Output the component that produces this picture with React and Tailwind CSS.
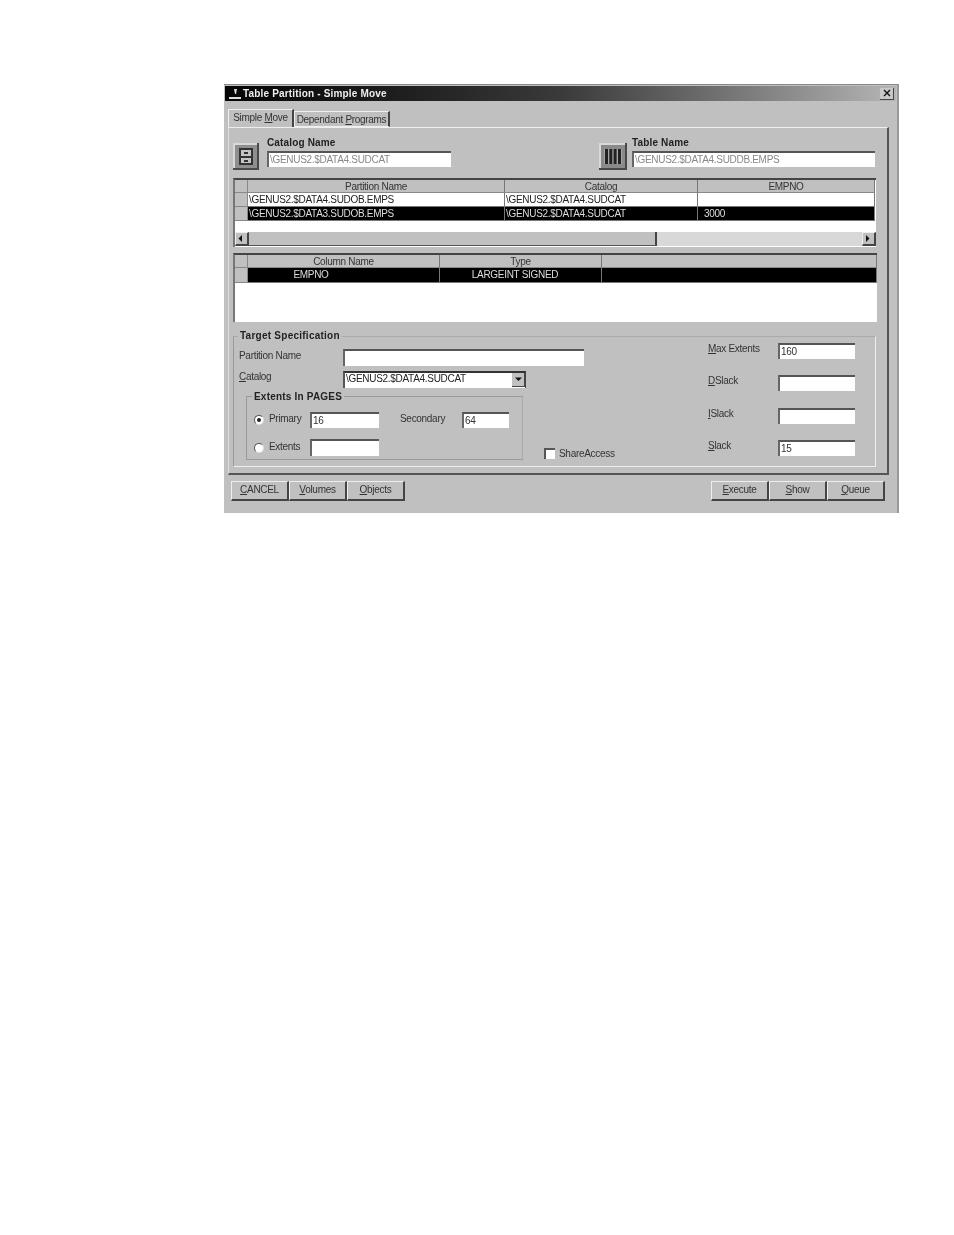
const font = { fontFamily: '"Liberation Sans", Arial, sans-serif' };

function Field({ className = "", children }) {
  return (
    <div className={"h-[16px] bg-white border-t-2 border-l-2 border-t-[#555] border-l-[#666] pl-[1px] text-[10px] leading-[14px] text-[#333] whitespace-nowrap overflow-hidden " + className}>
      {children}
    </div>
  );
}

function U({ children }) {
  return <span className="underline">{children}</span>;
}

function HeaderCell({ className = "", children }) {
  return (
    <div className={"h-full bg-[#c0c0c0] border-r border-r-[#777] border-b border-b-[#888] text-center text-[10px] leading-[13px] text-[#333] " + className}>
      {children}
    </div>
  );
}

function Cell({ className = "", dark, center, children }) {
  return (
    <div className={"h-full border-r border-b border-[#777] pl-[1px] text-[10px] leading-[13px] whitespace-nowrap " + (dark ? "bg-black text-[#ddd] " : "bg-white text-[#222] ") + (center ? "text-center " : "") + className}>
      {children}
    </div>
  );
}

function Indicator() {
  return <div className="w-[13px] h-full bg-[#c0c0c0] border-r border-b border-[#888] shrink-0" />;
}

function Button({ className = "", children }) {
  return (
    <div className={"h-[20px] bg-[#c0c0c0] border-t border-l border-t-[#eee] border-l-[#eee] border-r-2 border-b-2 border-r-[#444] border-b-[#444] text-center text-[10px] leading-[16px] text-[#333] " + className}>
      {children}
    </div>
  );
}

function Radio({ on }) {
  return (
    <div className="w-[10px] h-[10px] rounded-full bg-white border border-t-[#555] border-l-[#555] border-r-[#ddd] border-b-[#ddd] flex items-center justify-center shrink-0">
      {on && <div className="w-[4px] h-[4px] rounded-full bg-[#222]" />}
    </div>
  );
}

function CabinetIcon() {
  return (
    <svg width="26" height="27" viewBox="0 0 26 27">
      <rect x="0" y="0" width="26" height="27" fill="#8f8f8f" />
      <path d="M0 0H26V2H2V27H0Z" fill="#d8d8d8" />
      <path d="M26 27H0V25H24V0H26Z" fill="#4a4a4a" />
      <rect x="6" y="5" width="14" height="17" fill="#333" />
      <rect x="8" y="7" width="10" height="6" fill="#c4c4c4" />
      <rect x="8" y="15" width="10" height="5" fill="#c4c4c4" />
      <rect x="11" y="9" width="4" height="2" fill="#333" />
      <rect x="11" y="17" width="4" height="2" fill="#333" />
    </svg>
  );
}

function BarsIcon() {
  return (
    <svg width="28" height="27" viewBox="0 0 28 27">
      <rect x="0" y="0" width="28" height="27" fill="#8a8a8a" />
      <path d="M0 0H28V2H2V27H0Z" fill="#d8d8d8" />
      <path d="M28 27H0V25H26V0H28Z" fill="#484848" />
      <rect x="5" y="6" width="18" height="15" fill="#a5a5a5" />
      <rect x="6" y="6" width="3" height="15" fill="#222" />
      <rect x="10.3" y="6" width="3" height="15" fill="#222" />
      <rect x="14.6" y="6" width="3" height="15" fill="#222" />
      <rect x="19" y="6" width="3" height="15" fill="#222" />
    </svg>
  );
}

function Arrow({ dir }) {
  const d = dir === "left" ? "M5 1V8L1.5 4.5Z" : dir === "right" ? "M2 1V8L5.5 4.5Z" : "M1 2.5H8L4.5 6Z";
  return (
    <svg width="9" height="9" viewBox="0 0 9 9">
      <path d={d} fill="#111" />
    </svg>
  );
}

function ScrollButton({ dir }) {
  return (
    <div className="w-[14px] h-[14px] bg-[#c0c0c0] border-r-2 border-b-2 border-r-[#444] border-b-[#444] border-t border-l border-t-[#eee] border-l-[#eee] flex items-center justify-center shrink-0">
      <Arrow dir={dir} />
    </div>
  );
}

function RightRow({ label, value, className = "" }) {
  return (
    <div className={"flex items-start h-[16px] " + className}>
      <div className="w-[70px] -mt-[1px] text-[10px] leading-[13px] text-[#333] whitespace-nowrap">{label}</div>
      <Field className="w-[77px]">{value}</Field>
    </div>
  );
}

export default function App() {
  return (
    <div className="w-[954px] h-[1235px] bg-white pt-[84px] pl-[224px]" style={font}>
      <div className="w-[675px] h-[429px] bg-[#c0c0c0] border-t border-r-2 border-t-[#888] border-r-[#999] blur-[0.6px] tracking-[-0.3px]">
        {/* title bar */}
        <div className="mx-[1px] mt-[1px] h-[15px] bg-gradient-to-r from-[#050505] via-[#3a3a3a] to-[#b5b5b5] flex items-center justify-between pl-[2px] pr-[2px]">
          <div className="flex items-center">
            <svg width="16" height="12" viewBox="0 0 16 12" className="shrink-0">
              <path d="M7 1H10L9 6H8ZM2 9H14V11H2Z" fill="#ddd" />
            </svg>
            <span className="text-[10px] font-bold text-[#eee] leading-[14px] whitespace-nowrap tracking-[0.17px]">Table Partition - Simple Move</span>
          </div>
          <div className="w-[14px] h-[12px] bg-[#c8c8c8] border-r border-b border-r-[#444] border-b-[#444] flex items-center justify-center">
            <svg width="8" height="8" viewBox="0 0 8 8">
              <path d="M1 1L7 7M7 1L1 7" stroke="#111" strokeWidth="1.4" />
            </svg>
          </div>
        </div>

        {/* tabs */}
        <div className="flex items-end ml-[4px] mt-[7px] h-[19px] relative z-10">
          <div className="w-[66px] h-[18px] bg-[#c0c0c0] border-t border-l border-t-[#eee] border-l-[#eee] border-r-2 border-r-[#444] text-center text-[10px] leading-[15px] text-[#333] whitespace-nowrap">
            Simple <U>M</U>ove
          </div>
          <div className="w-[96px] h-[16px] bg-[#c0c0c0] border-t border-l border-t-[#eee] border-l-[#eee] border-r-2 border-r-[#444] border-b border-b-[#eee] text-center text-[10px] leading-[15px] text-[#333] whitespace-nowrap">
            Dependant <U>P</U>rograms
          </div>
        </div>

        {/* tab panel */}
        <div className="ml-[4px] w-[661px] h-[348px] border-t border-l border-t-[#eee] border-l-[#ddd] border-r-2 border-b-2 border-r-[#555] border-b-[#555] pl-[4px] pt-[9px]">
          {/* name row */}
          <div className="flex items-start h-[32px]">
            <div className="mt-[6px] shrink-0"><CabinetIcon /></div>
            <div className="ml-[8px] w-[184px]">
              <div className="h-[14px] text-[10px] font-bold leading-[12px] text-[#222] tracking-[0.15px]">Catalog Name</div>
              <Field className="text-[#888]">\GENUS2.$DATA4.SUDCAT</Field>
            </div>
            <div className="ml-[148px] mt-[6px] shrink-0"><BarsIcon /></div>
            <div className="ml-[5px] w-[243px]">
              <div className="h-[14px] text-[10px] font-bold leading-[12px] text-[#222] tracking-[0.15px]">Table Name</div>
              <Field className="text-[#888]">\GENUS2.$DATA4.SUDDB.EMPS</Field>
            </div>
          </div>

          {/* partition grid */}
          <div className="mt-[9px] w-[643px] h-[69px] border-t-2 border-l-2 border-t-[#444] border-l-[#777] bg-white flex flex-col">
            <div className="flex h-[13px]">
              <Indicator />
              <HeaderCell className="w-[257px]">Partition Name</HeaderCell>
              <HeaderCell className="w-[193px]">Catalog</HeaderCell>
              <HeaderCell className="w-[177px]">EMPNO</HeaderCell>
            </div>
            <div className="flex h-[14px]">
              <Indicator />
              <Cell className="w-[257px]">\GENUS2.$DATA4.SUDOB.EMPS</Cell>
              <Cell className="w-[193px]">\GENUS2.$DATA4.SUDCAT</Cell>
              <Cell className="w-[177px]" />
            </div>
            <div className="flex h-[14px]">
              <Indicator />
              <Cell dark className="w-[257px]">\GENUS2.$DATA3.SUDOB.EMPS</Cell>
              <Cell dark className="w-[193px]">\GENUS2.$DATA4.SUDCAT</Cell>
              <Cell dark className="w-[177px] pl-[6px]">3000</Cell>
            </div>
            <div className="flex-1" />
            <div className="flex h-[14px] mb-[1px] bg-[#d8d8d8] w-[641px]">
              <ScrollButton dir="left" />
              <div className="w-[408px] h-full bg-[#c0c0c0] border-r-2 border-b border-r-[#444] border-b-[#555]" />
              <div className="flex-1" />
              <ScrollButton dir="right" />
            </div>
          </div>

          {/* column grid */}
          <div className="mt-[6px] w-[644px] h-[69px] border-t-2 border-l-2 border-t-[#444] border-l-[#777] bg-white">
            <div className="flex h-[13px]">
              <Indicator />
              <HeaderCell className="w-[192px]">Column Name</HeaderCell>
              <HeaderCell className="w-[162px]">Type</HeaderCell>
              <HeaderCell className="flex-1" />
            </div>
            <div className="flex h-[15px]">
              <Indicator />
              <Cell dark center className="w-[192px] pr-[66px] leading-[14px]">EMPNO</Cell>
              <Cell dark center className="w-[162px] pr-[12px] leading-[14px]">LARGEINT SIGNED</Cell>
              <Cell dark className="flex-1" />
            </div>
          </div>

          {/* target specification */}
          <div className="relative mt-[14px] w-[643px] h-[131px] border border-t-[#aaa] border-l-[#999] border-r-[#eee] border-b-[#eee] flex">
            <div className="absolute left-[4px] -top-[7px] bg-[#c0c0c0] px-[2px] text-[10px] font-bold leading-[12px] text-[#222] tracking-[0.25px] whitespace-nowrap">Target Specification</div>

            <div className="w-[310px] pl-[5px] shrink-0">
              <div className="mt-[12px] flex items-start h-[18px]">
                <div className="w-[104px] shrink-0 text-[10px] leading-[13px] text-[#333] whitespace-nowrap">Partition Name</div>
                <Field className="w-[241px] h-[17px] shrink-0" />
              </div>
              <div className="mt-[4px] flex items-start h-[17px]">
                <div className="w-[104px] shrink-0 -mt-[1px] text-[10px] leading-[13px] text-[#333]"><U>C</U>atalog</div>
                <div className="w-[183px] h-[17px] bg-white border-t-2 border-l-2 border-t-[#333] border-l-[#555] border-r border-r-[#444] pl-[1px] flex items-start justify-between text-[10px] leading-[12px] text-[#222] whitespace-nowrap shrink-0">
                  \GENUS2.$DATA4.SUDCAT
                  <div className="w-[13px] h-[14px] bg-[#c0c0c0] border-r border-b border-r-[#444] border-b-[#444] flex items-center justify-center"><Arrow dir="down" /></div>
                </div>
              </div>

              <div className="relative mt-[8px] ml-[7px] w-[277px] h-[64px] border border-[#999] border-r-[#aaa] pl-[7px] pt-[15px]">
                <div className="absolute left-[5px] -top-[6px] bg-[#c0c0c0] px-[2px] text-[10px] font-bold leading-[12px] text-[#222] whitespace-nowrap tracking-[0.2px]">Extents In PAGES</div>
                <div className="flex items-center h-[16px]">
                  <Radio on />
                  <div className="w-[41px] shrink-0 ml-[5px] text-[10px] leading-[13px] -mt-[3px] text-[#333]">Primary</div>
                  <Field className="w-[69px] shrink-0" >16</Field>
                  <div className="w-[62px] shrink-0 ml-[21px] text-[10px] leading-[13px] -mt-[4px] text-[#333]">Secondary</div>
                  <Field className="w-[47px] shrink-0">64</Field>
                </div>
                <div className="flex items-center h-[17px] mt-[11px]">
                  <Radio />
                  <div className="w-[41px] shrink-0 ml-[5px] text-[10px] leading-[13px] -mt-[3px] text-[#333]">Extents</div>
                  <Field className="w-[69px] h-[17px] shrink-0" />
                </div>
              </div>
            </div>

            <div className="w-[164px] flex items-end pb-[6px]">
              <div className="flex items-center">
                <div className="w-[11px] h-[11px] bg-white border-t-2 border-l-2 border-t-[#555] border-l-[#555] shrink-0" />
                <div className="ml-[4px] text-[10px] leading-[13px] text-[#333] whitespace-nowrap">ShareAccess</div>
              </div>
            </div>

            <div className="pt-[6px]">
              <RightRow label={<><U>M</U>ax Extents</>} value="160" />
              <RightRow label={<><U>D</U>Slack</>} className="mt-[16px]" />
              <RightRow label={<><U>I</U>Slack</>} className="mt-[17px]" />
              <RightRow label={<><U>S</U>lack</>} value="15" className="mt-[16px]" />
            </div>
          </div>
        </div>

        {/* bottom buttons */}
        <div className="flex justify-between mt-[6px] pl-[7px] pr-[12px]">
          <div className="flex">
            <Button className="w-[58px]"><U>C</U>ANCEL</Button>
            <Button className="w-[58px]"><U>V</U>olumes</Button>
            <Button className="w-[58px]"><U>O</U>bjects</Button>
          </div>
          <div className="flex">
            <Button className="w-[58px]"><U>E</U>xecute</Button>
            <Button className="w-[58px]"><U>S</U>how</Button>
            <Button className="w-[58px]"><U>Q</U>ueue</Button>
          </div>
        </div>
      </div>
    </div>
  );
}
